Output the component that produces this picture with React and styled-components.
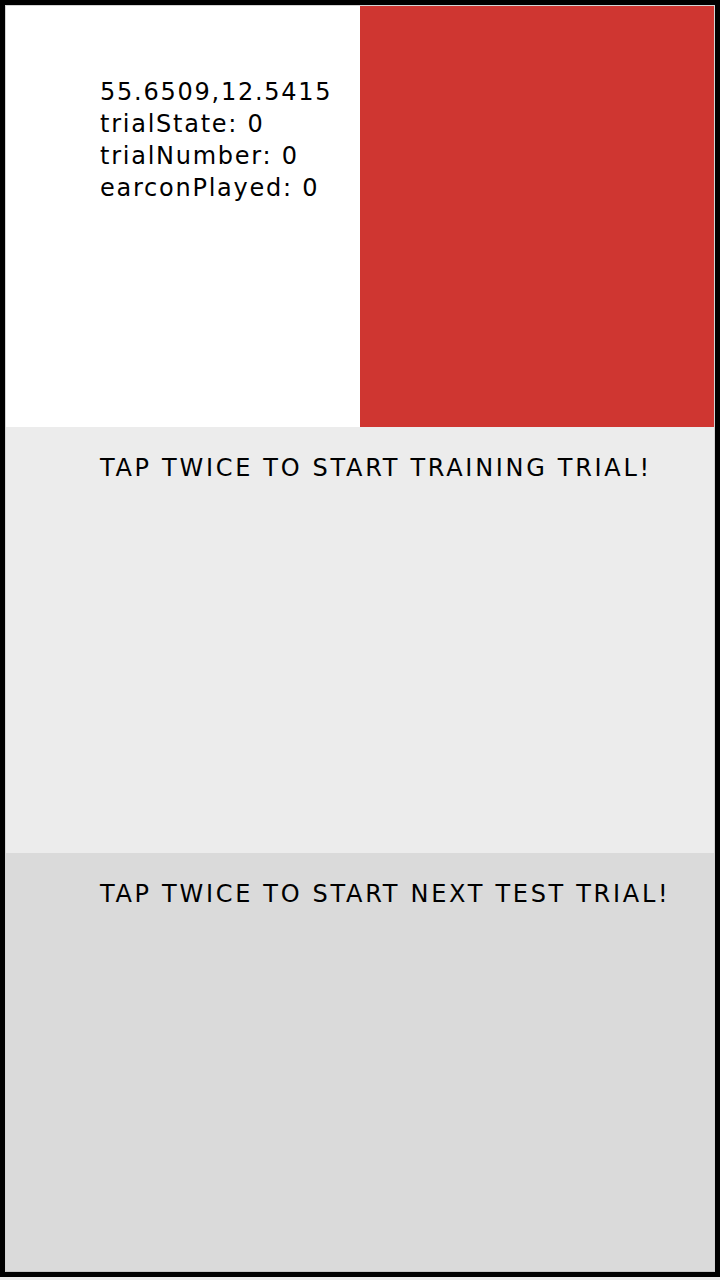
import React from "react";
import styled, { createGlobalStyle } from "styled-components";

const GlobalStyle = createGlobalStyle`
  html, body {
    margin: 0;
    padding: 0;
    background: #ececec;
  }
  body {
    font-family: "DejaVu Sans", Verdana, sans-serif;
    color: #000;
  }
`;

const Frame = styled.div`
  box-sizing: border-box;
  width: 720px;
  height: 1277px;
  border: 5px solid #000;
  display: flex;
  flex-direction: column;
`;

const Panel = styled.div`
  box-sizing: border-box;
  height: ${(p) => p.$h}px;
  background: ${(p) => p.$bg};
  border-left: 1px solid #d4d4d4;
  border-right: 1px solid #d4d4d4;
  display: flex;
`;

const InfoPane = styled.div`
  box-sizing: border-box;
  flex: none;
  width: 354px;
  background: #fff;
  padding: 70px 0 0 94px;
`;

const Indicator = styled.div`
  flex: 1;
  background: #cf3631;
`;

const Readout = styled.div`
  font-size: 24px;
  line-height: 32px;
  letter-spacing: 1.75px;
  white-space: nowrap;
`;

const Prompt = styled.div`
  padding: 25px 0 0 94px;
  font-size: 24px;
  line-height: 32px;
  letter-spacing: 2.7px;
  white-space: nowrap;
`;

export default function App() {
  const stats = [
    "55.6509,12.5415",
    "trialState: 0",
    "trialNumber: 0",
    "earconPlayed: 0",
  ];

  return (
    <>
      <GlobalStyle />
      <Frame>
        <Panel $h={422} $bg="#fff" style={{ borderTop: "1px solid #d4d4d4" }}>
          <InfoPane>
            {stats.map((s) => (
              <Readout key={s}>{s}</Readout>
            ))}
          </InfoPane>
          <Indicator />
        </Panel>
        <Panel $h={426} $bg="#ececec">
          <Prompt>TAP TWICE TO START TRAINING TRIAL!</Prompt>
        </Panel>
        <Panel $h={419} $bg="#dadada" style={{ borderBottom: "1px solid #c4c4c4" }}>
          <Prompt>TAP TWICE TO START NEXT TEST TRIAL!</Prompt>
        </Panel>
      </Frame>
    </>
  );
}
